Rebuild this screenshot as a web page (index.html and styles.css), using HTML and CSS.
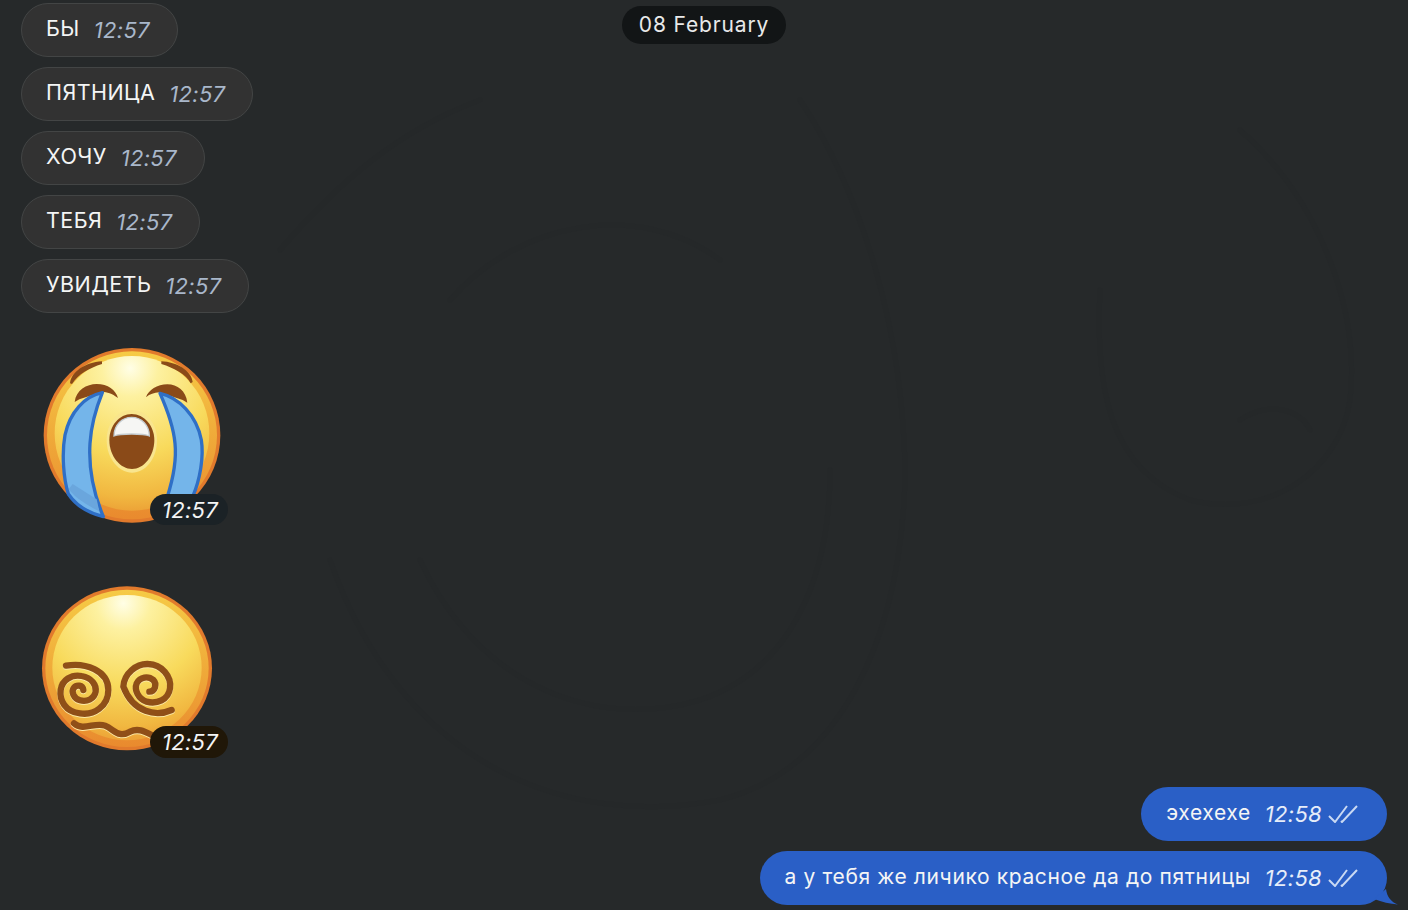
FILE: index.html
```html
<!DOCTYPE html>
<html lang="ru">
<head>
<meta charset="utf-8">
<title>Chat</title>
<link rel="stylesheet" href="styles.css">
</head>
<body>
<main class="chat">
  <svg class="doodles" width="1408" height="910" viewBox="0 0 1408 910">
    <g fill="none" stroke="#222527" stroke-width="5" stroke-linecap="round">
      <path d="M1100 290C1095 390 1110 470 1190 500C1270 520 1340 470 1350 400C1360 310 1320 200 1240 130"/>
      <path d="M1240 420C1270 400 1300 410 1310 430"/>
      <path d="M330 560C400 760 560 830 720 800C840 770 900 640 905 480C905 330 860 190 800 100"/>
      <path d="M420 560C480 690 600 730 700 700C790 670 830 580 830 470"/>
      <path d="M450 300C520 220 640 200 720 260"/>
      <path d="M280 250C340 180 400 130 480 100"/>
    </g>
  </svg>

  <div class="date-pill">08 February</div>

  <div class="bubble"><span class="text">БЫ</span><time class="time">12:57</time></div>
  <div class="bubble"><span class="text">ПЯТНИЦА</span><time class="time">12:57</time></div>
  <div class="bubble"><span class="text">ХОЧУ</span><time class="time">12:57</time></div>
  <div class="bubble"><span class="text">ТЕБЯ</span><time class="time">12:57</time></div>
  <div class="bubble"><span class="text">УВИДЕТЬ</span><time class="time">12:57</time></div>

  <div class="sticker sticker-one">
    <svg class="sticker-art" width="210" height="195" viewBox="0 0 630 585">
      <defs>
        <radialGradient id="faceA" gradientUnits="userSpaceOnUse" cx="300" cy="85" r="470">
          <stop offset="0" stop-color="#fffee6"/>
          <stop offset=".18" stop-color="#fdf1a0"/>
          <stop offset=".55" stop-color="#f8da5c"/>
          <stop offset=".82" stop-color="#f1b740"/>
          <stop offset="1" stop-color="#e8902f"/>
        </radialGradient>
        <linearGradient id="rimA" x1="0" y1="0" x2="0" y2="1">
          <stop offset="0" stop-color="#f6cb45"/>
          <stop offset="1" stop-color="#e98a2e"/>
        </linearGradient>
      </defs>
      <ellipse cx="306" cy="286" rx="265" ry="262" fill="#e17a2c"/>
      <ellipse cx="306" cy="286" rx="255" ry="252" fill="url(#rimA)"/>
      <ellipse cx="306" cy="280" rx="232" ry="232" fill="url(#faceA)"/>
      <path d="M120 130C124 95 165 68 216 64L216 72C178 84 145 102 126 132Z" fill="#8a4a18"/>
      <path d="M394 64C440 66 484 92 488 126L482 130C468 102 432 84 394 72Z" fill="#8a4a18"/>
      <path d="M134 186C138 150 170 132 200 132C234 132 257 150 264 174C245 160 232 156 216 156L148 178Z" fill="#8a4a18"/>
      <path d="M348 172C355 150 382 133 412 133C442 133 468 152 472 188L458 180L388 157C372 158 360 162 348 172Z" fill="#8a4a18"/>
      <path d="M217 158C165 168 120 215 105 285C95 340 100 415 115 462C140 500 180 520 220 530C195 470 175 390 180 310C183 260 198 205 217 158Z" fill="#74b5ea" stroke="#2f6fc6" stroke-width="10" stroke-linejoin="round"/>
      <path d="M116 448C140 478 175 498 208 514L200 478L128 432Z" fill="#6aa6dd"/>
      <path d="M390 160C445 172 500 225 514 300C522 350 510 420 488 470L412 470C428 420 440 360 435 310C430 255 410 205 390 160Z" fill="#74b5ea" stroke="#2f6fc6" stroke-width="10" stroke-linejoin="round"/>
      <path d="M305 210C262 210 230 250 230 300C230 358 268 398 306 398C345 398 381 358 381 300C381 250 348 210 305 210Z" fill="#f9e58e"/>
      <path d="M305 222C268 222 238 258 238 300C238 350 272 387 306 387C340 387 373 350 373 300C373 258 342 222 305 222Z" fill="#8a4a18"/>
      <path d="M252 288C252 256 275 232 305 232C335 232 358 256 358 288C340 280 270 280 252 288Z" fill="#f6f6f4" stroke="#c5ccd0" stroke-width="4"/>
    </svg>
    <time class="sticker-time">12:57</time>
  </div>

  <div class="sticker sticker-two">
    <svg class="sticker-art" width="210" height="195" viewBox="0 0 630 585">
      <defs>
        <radialGradient id="faceB" gradientUnits="userSpaceOnUse" cx="280" cy="85" r="450">
          <stop offset="0" stop-color="#fffee6"/>
          <stop offset=".18" stop-color="#fdf1a0"/>
          <stop offset=".55" stop-color="#f8da5c"/>
          <stop offset=".82" stop-color="#f1b740"/>
          <stop offset="1" stop-color="#e8902f"/>
        </radialGradient>
        <linearGradient id="rimB" x1="0" y1="0" x2="0" y2="1">
          <stop offset="0" stop-color="#f6cb45"/>
          <stop offset="1" stop-color="#e98a2e"/>
        </linearGradient>
      </defs>
      <ellipse cx="291" cy="280" rx="255" ry="246" fill="#e17a2c"/>
      <ellipse cx="291" cy="280" rx="245" ry="236" fill="url(#rimB)"/>
      <ellipse cx="291" cy="278" rx="224" ry="218" fill="url(#faceB)"/>
      <g fill="none" stroke-linecap="round" stroke-linejoin="round" stroke-width="19">
        <g stroke="#fbe9a6" transform="translate(0 3)">
          <path d="M108 272C165 262 235 285 235 345C235 395 190 422 150 415C105 410 88 375 92 345C96 315 125 297 155 303C185 308 200 330 197 350C193 372 170 382 150 376C130 370 123 350 132 338C140 328 158 330 160 345"/>
          <path d="M425 405C380 425 310 415 280 335C282 295 320 265 355 267C395 268 425 305 420 340C415 375 380 388 350 380C325 372 312 345 320 325C330 305 355 302 370 315C382 328 375 350 358 350"/>
          <path d="M132 445C160 470 195 440 225 452C255 465 265 490 300 470C325 458 345 470 365 480"/>
        </g>
        <g stroke="#8f4f18">
          <path d="M108 272C165 262 235 285 235 345C235 395 190 422 150 415C105 410 88 375 92 345C96 315 125 297 155 303C185 308 200 330 197 350C193 372 170 382 150 376C130 370 123 350 132 338C140 328 158 330 160 345"/>
          <path d="M425 405C380 425 310 415 280 335C282 295 320 265 355 267C395 268 425 305 420 340C415 375 380 388 350 380C325 372 312 345 320 325C330 305 355 302 370 315C382 328 375 350 358 350"/>
          <path d="M132 445C160 470 195 440 225 452C255 465 265 490 300 470C325 458 345 470 365 480"/>
        </g>
      </g>
    </svg>
    <time class="sticker-time sticker-time-warm">12:57</time>
  </div>

  <div class="bubble bubble-own bubble-first">
    <span class="text">эхехехе</span><time class="time">12:58</time>
    <svg class="checks" width="30" height="18" viewBox="0 0 30 18"><path d="M1 11L7 17L19 1M13 16L14 17L29 1" fill="none" stroke="#c9d9f3" stroke-width="2"/></svg>
  </div>
  <div class="bubble bubble-own">
    <span class="text">а у тебя же личико красное да до пятницы</span><time class="time">12:58</time>
    <svg class="checks" width="30" height="18" viewBox="0 0 30 18"><path d="M1 11L7 17L19 1M13 16L14 17L29 1" fill="none" stroke="#c9d9f3" stroke-width="2"/></svg>
    <svg class="tail" width="26" height="18" viewBox="0 0 26 18"><path d="M2 11L14 1C15 9 19 14 26 16.5C18 16 10 14 2 11Z" fill="#2a5fc6"/></svg>
  </div>
</main>
</body>
</html>
```

FILE: styles.css
```css
* { box-sizing: border-box; }
html, body { margin: 0; height: 100%; }
body {
  background: #26292a;
  overflow: hidden;
  font-family: Inter, "Liberation Sans", sans-serif;
  color: #f4f5f5;
}
.chat {
  position: relative;
  height: 910px;
  padding: 3px 21px 5px;
  display: flex;
  flex-direction: column;
  align-items: flex-start;
  gap: 10px;
}
.doodles {
  position: absolute;
  inset: 0;
  opacity: .22;
}
.date-pill {
  position: absolute;
  top: 6px;
  left: 622px;
  width: 164px;
  height: 38px;
  padding-bottom: 2px;
  border-radius: 19px;
  background: #121516;
  display: flex;
  align-items: center;
  justify-content: center;
  font-size: 21px;
  letter-spacing: .85px;
  color: #e8e9e9;
}
.bubble {
  position: relative;
  height: 54px;
  padding: 0 27px 0 24px;
  border: 1px solid #434545;
  border-radius: 27px;
  background: #323232;
  display: flex;
  align-items: center;
  gap: 14px;
}
.text {
  font-size: 21.5px;
  line-height: 28px;
  letter-spacing: .45px;
  position: relative;
  top: -2px;
}
.time {
  font-size: 22px;
  font-style: italic;
  letter-spacing: .3px;
  color: #a9b7ca;
  position: relative;
}
.sticker {
  position: relative;
  width: 210px;
  height: 195px;
  margin-left: 9px;
}
.sticker-one { margin-top: 17px; }
.sticker-two { margin-top: 30px; }
.sticker-art { display: block; }
.sticker-time {
  position: absolute;
  left: 120px;
  top: 154px;
  width: 78px;
  height: 31px;
  border-radius: 16px;
  background: #1b2226;
  color: #f4f5f5;
  font-size: 22px;
  font-style: italic;
  letter-spacing: .3px;
  padding-left: 2px;
  display: flex;
  align-items: center;
  justify-content: center;
}
.sticker-time-warm {
  top: 151px;
  height: 32px;
  background: #201708;
}
.bubble-own {
  align-self: flex-end;
  border: 0;
  background: #2a5fc6;
  padding: 0 29px 0 25px;
  gap: 14px;
}
.bubble-own .text {
  font-size: 21px;
  letter-spacing: .63px;
  top: -1px;
}
.bubble-first { margin-top: 7px; }
.bubble-own .time { color: #e6edf9; }
.checks { margin-left: -8px; }
.tail { position: absolute; right: -11px; bottom: -1px; }
```
